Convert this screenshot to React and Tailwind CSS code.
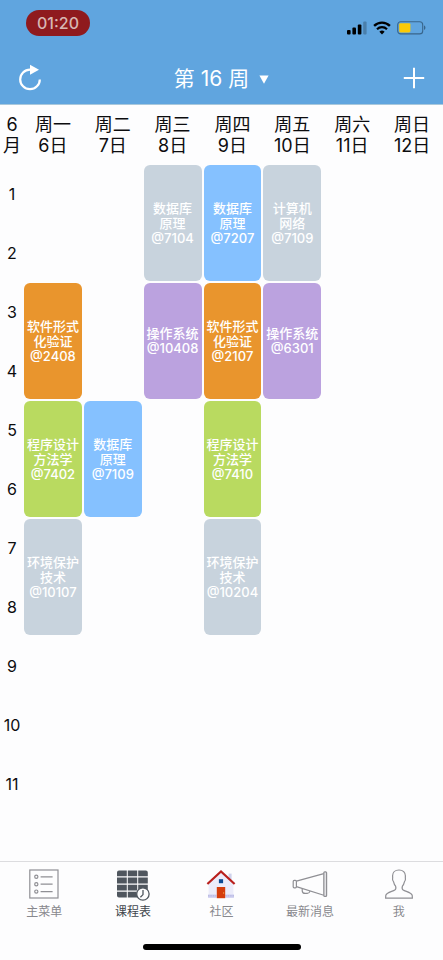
import React from "react";

const days = [
  ["周一", "6日"],
  ["周二", "7日"],
  ["周三", "8日"],
  ["周四", "9日"],
  ["周五", "10日"],
  ["周六", "11日"],
  ["周日", "12日"],
];

const gray = "bg-[#c8d3dd]";
const blue = "bg-[#85c1ff]";
const orange = "bg-[#e9952d]";
const purple = "bg-[#bba2df]";
const green = "bg-[#b9da60]";

// One entry per two-period block, one slot per weekday.
const blocks = [
  [
    null,
    null,
    { color: gray, lines: ["数据库", "原理", "@7104"] },
    { color: blue, lines: ["数据库", "原理", "@7207"] },
    { color: gray, lines: ["计算机", "网络", "@7109"] },
    null,
    null,
  ],
  [
    { color: orange, lines: ["软件形式", "化验证", "@2408"] },
    null,
    { color: purple, lines: ["操作系统", "@10408"] },
    { color: orange, lines: ["软件形式", "化验证", "@2107"] },
    { color: purple, lines: ["操作系统", "@6301"] },
    null,
    null,
  ],
  [
    { color: green, lines: ["程序设计", "方法学", "@7402"] },
    { color: blue, lines: ["数据库", "原理", "@7109"] },
    null,
    { color: green, lines: ["程序设计", "方法学", "@7410"] },
    null,
    null,
    null,
  ],
  [
    { color: gray, lines: ["环境保护", "技术", "@10107"] },
    null,
    null,
    { color: gray, lines: ["环境保护", "技术", "@10204"] },
    null,
    null,
    null,
  ],
];

const periods = [1, 2, 3, 4, 5, 6, 7, 8, 9, 10, 11];

function Course({ course }) {
  return (
    <button
      type="button"
      className={`flex h-[116px] w-full flex-col items-center justify-center rounded-md text-[13px] leading-[15px] font-medium whitespace-nowrap text-white ${course.color}`}
    >
      {course.lines.map((line) => (
        <span key={line}>{line}</span>
      ))}
    </button>
  );
}

function StatusBar() {
  return (
    <div className="flex h-[52px] items-start justify-between pt-[10px] pr-[17px] pl-[26px]">
      <div className="flex h-[26px] w-16 items-center justify-center rounded-full bg-[#8f1a1e] text-base leading-5 font-medium text-[#d8b7b3]">
        01:20
      </div>
      <div className="flex items-center gap-[6px] pt-[11px]">
        <svg width="20" height="14" viewBox="0 0 20 14" aria-hidden="true">
          <rect x="0" y="9" width="3.6" height="4.6" rx="1" />
          <rect x="5.4" y="6.4" width="3.6" height="7.2" rx="1" />
          <rect x="10.8" y="3.4" width="3.6" height="10.2" rx="1" />
          <rect x="16.2" y="0.6" width="3.4" height="13" rx="1" fill="#4a7fab" />
        </svg>
        <svg width="18" height="14" viewBox="0 0 18 14" aria-hidden="true">
          <path d="M1.100 4.800a11.400 11.400 0 0 1 15.800 0" fill="none" stroke="#000" strokeWidth="2.400" />
          <path d="M4 8.200a7.200 7.200 0 0 1 10 0" fill="none" stroke="#000" strokeWidth="2.200" />
          <path d="M9 13.400 6.400 10.700a4 4 0 0 1 5.200 0z" />
        </svg>
        <svg width="29" height="14" viewBox="0 0 29 14" aria-hidden="true">
          <rect x="0.7" y="0.7" width="25" height="12.2" rx="3" fill="none" stroke="#38658b" strokeWidth="1.1" />
          <rect x="2.2" y="2.2" width="11.2" height="9.2" rx="1.4" fill="#fbca06" />
          <path d="M27 4.6c1.9.6 1.9 3.8 0 4.400z" fill="#38658b" />
        </svg>
      </div>
    </div>
  );
}

function MenuIcon() {
  return (
    <svg width="30" height="30" viewBox="0 0 30 30" fill="none" stroke="#8f8f94" strokeWidth="1.2" aria-hidden="true">
      <rect x="0.8" y="1" width="28.2" height="28" />
      <circle cx="7.3" cy="7.8" r="1.6" />
      <circle cx="7.3" cy="15.2" r="1.6" />
      <circle cx="7.3" cy="22.6" r="1.6" />
      <path d="M11.6 7.8h12M11.6 15.2h12M11.6 22.6h12" />
    </svg>
  );
}

function TimetableIcon() {
  return (
    <svg width="34" height="32" viewBox="0 0 34 32" className="-mb-0.5" aria-hidden="true">
      <g fill="#4f565e">
        <path d="M3 1.500h7.800v5.800H1V3.500a2 2 0 0 1 2-2z" />
        <path d="M11.800 1.500h9.400v5.800h-9.400zM22.200 1.500h7.600a2 2 0 0 1 2 2v3.800h-9.600z" />
        <path d="M1 8.600h9.800v5.800H1zM11.800 8.600h9.400v5.800h-9.400zM22.200 8.600h9.600v5.800h-9.600z" />
        <path d="M1 15.700h9.800v5.800H1zM11.800 15.700h9.400v5.800h-9.400zM22.200 15.700h9.600v5.800h-9.600z" />
        <path d="M1 22.800h9.800v5.600H3a2 2 0 0 1-2-2zM11.800 22.800h9.400v5.600h-9.400z" />
      </g>
      <circle cx="26.900" cy="25" r="6.200" fill="#fdfdfe" stroke="#4f565e" strokeWidth="1.3" />
      <path d="M27 21v4.600l-2.600 2.600" fill="none" stroke="#4f565e" strokeWidth="1.3" />
    </svg>
  );
}

function HouseIcon() {
  return (
    <svg width="30" height="30" viewBox="0 0 30 30" aria-hidden="true">
      <path d="M22.6 4.6h3v7h-3z" fill="#cfd2ec" />
      <path d="M15 3 2.6 14v15h24.8V14z" fill="#ececfa" />
      <path d="M2 25.4h8.4v3.4H2zM19.4 25.4H28v3.4h-8.6z" fill="#cdcdf0" />
      <path d="M2 26.8h8.4M19.4 26.8H28" stroke="#aeb0d8" strokeWidth="0.8" strokeDasharray="1.4 1" />
      <path d="M1.400 15 15 2.400 28.600 15" fill="none" stroke="#b9201d" strokeWidth="2.200" />
      <rect x="12.9" y="10.2" width="4.2" height="4" fill="#0c4a94" />
      <rect x="10.8" y="18" width="8.4" height="11.2" fill="#d53d0c" />
      <circle cx="17.6" cy="24" r="0.7" fill="#f5a44a" />
    </svg>
  );
}

function MegaphoneIcon() {
  return (
    <svg width="36" height="30" viewBox="0 0 36 30" fill="none" stroke="#8f8f94" strokeWidth="1.2" aria-hidden="true">
      <rect x="1.2" y="11.4" width="3.2" height="7.4" rx="1" />
      <path d="M4.4 12.2 31.8 4.6M4.4 17.6l27.4 8.6" />
      <rect x="31.8" y="2.8" width="2.8" height="24.6" rx="1" fill="#e2e2e5" />
      <path d="M10.2 19.6v1.8a3 3 0 0 0 3 3h2a3 3 0 0 0 2.8-2.4" />
    </svg>
  );
}

function PersonIcon() {
  return (
    <svg width="30" height="30" viewBox="0 0 30 30" fill="none" stroke="#8f8f94" strokeWidth="1.2" strokeLinejoin="round" aria-hidden="true">
      <path d="M15 1c-4 0-6.400 2.400-6.400 5.800 0 1 .2 1.800 0 2.600-.3 1.300.2 2.600 1 3.400.4 2 1.200 3.400 2 4.400.5 1.400.3 3-.8 3.800C8.600 22.500 2.400 23.400 1.800 26.400L1.600 29.200h26.800l-.2-2.800c-.6-3-6.800-3.900-9-5.400-1.100-.8-1.300-2.400-.8-3.800.8-1 1.600-2.400 2-4.400.8-.8 1.300-2.100 1-3.400-.2-.8 0-1.600 0-2.600C21.400 3.400 19 1 15 1z" />
    </svg>
  );
}

const tabs = [
  { label: "主菜单", icon: MenuIcon },
  { label: "课程表", icon: TimetableIcon, active: true },
  { label: "社区", icon: HouseIcon },
  { label: "最新消息", icon: MegaphoneIcon },
  { label: "我", icon: PersonIcon },
];

export default function App() {
  return (
    <div
      lang="zh-CN"
      className="flex min-h-screen flex-col bg-[#fdfdfe] font-['Inter','Noto_Sans_CJK_SC',sans-serif] text-[#0c0c0e]"
    >
      <header className="border-b border-[#a9c8dc] bg-[#60a5df]">
        <StatusBar />
        <div className="flex h-[52px] items-center justify-between px-[18px] text-white">
          <button type="button" aria-label="刷新" className="w-6">
            <svg width="24" height="28" viewBox="0 0 24 28" aria-hidden="true">
              <path d="M12 5.600A9.800 9.800 0 1 0 21.800 15.400" fill="none" stroke="currentColor" strokeWidth="2.2" />
              <path d="M12 0.800 21 5.800 12 10.800z" fill="currentColor" />
            </svg>
          </button>
          <button type="button" className="flex items-center gap-[10px] pt-0.5 text-[21px] leading-6">
            第 16 周
            <svg width="10" height="9" viewBox="0 0 10 9" aria-hidden="true">
              <path d="M0.400 0.400h9.200L5 8.800z" fill="currentColor" />
            </svg>
          </button>
          <button type="button" aria-label="添加" className="flex w-6 justify-end">
            <svg width="22" height="22" viewBox="0 0 22 22" aria-hidden="true">
              <path d="M11 0.800v20.400M0.800 11h20.400" stroke="currentColor" strokeWidth="2" />
            </svg>
          </button>
        </div>
      </header>

      <main className="grow">
        <table className="w-full table-fixed border-collapse">
          <thead>
            <tr className="h-[60px] text-lg leading-[21px]">
              <th scope="col" className="w-6 p-0 font-normal">
                6<br />月
              </th>
              {days.map(([name, date]) => (
                <th key={name} scope="col" className="p-0 pr-0.5 font-normal">
                  {name}
                  <br />
                  {date}
                </th>
              ))}
            </tr>
          </thead>
          <tbody>
            {periods.map((period, i) => (
              <tr key={period} className="h-[59px]">
                <th scope="row" className="p-0 pb-0.5 text-base leading-5 font-normal">
                  {period}
                </th>
                {i % 2 === 0 &&
                  blocks[i / 2] &&
                  blocks[i / 2].map((course, day) => (
                    <td key={day} rowSpan={2} className="p-0 pr-0.5 pb-0.5">
                      {course && <Course course={course} />}
                    </td>
                  ))}
              </tr>
            ))}
          </tbody>
        </table>
      </main>

      <footer className="border-t border-[#dcdcdf]">
        <nav className="grid grid-cols-5 pt-[7px]">
          {tabs.map(({ label, icon: Icon, active }) => (
            <a
              key={label}
              href="#"
              aria-current={active ? "page" : undefined}
              className={`flex flex-col items-center gap-[5px] text-xs leading-4 ${active ? "text-[#41464d]" : "text-[#88888d]"}`}
            >
              <Icon />
              {label}
            </a>
          ))}
        </nav>
        <div className="flex justify-center pt-6 pb-[10px]">
          <div className="h-[6px] w-[158px] rounded-full bg-black" />
        </div>
      </footer>
    </div>
  );
}
